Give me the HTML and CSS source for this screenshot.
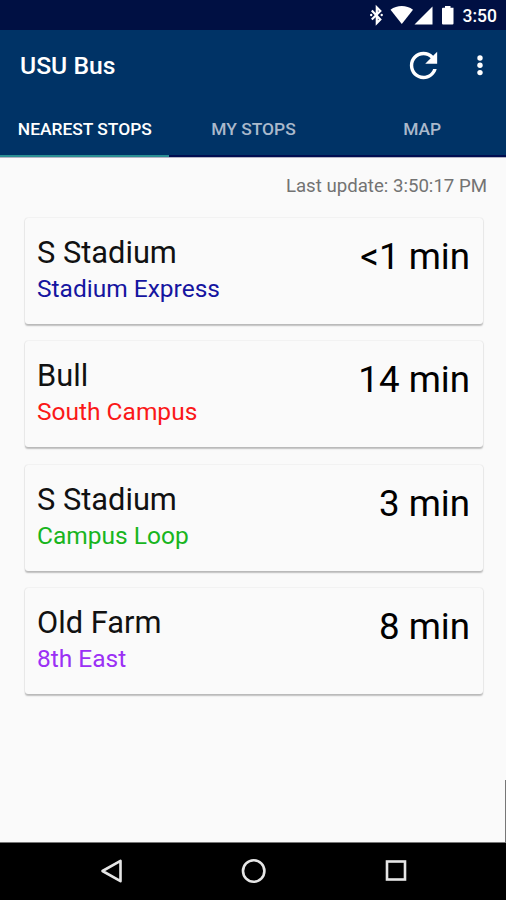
FILE: index.html
```html
<!DOCTYPE html>
<html lang="en">
<head>
<meta charset="utf-8">
<title>USU Bus</title>
<link rel="stylesheet" href="styles.css">
</head>
<body>
<div class="status">
  <svg class="status-icons" width="84" height="30" viewBox="0 0 84 30" fill="#fff">
    <path d="M.8 10.500 9.300 19.500 5.800 23V7.500L9.300 11 .8 19.500" fill="none" stroke="#fff" stroke-width="2.200"/>
    <circle cx=".2" cy="15" r="1.200"/><circle cx="10.700" cy="15" r="1.200"/>
    <path d="M19.500 9.700C26 4.900 35.500 4.900 42 9.700L30.800 24Z"/>
    <path d="M61.500 6.500V24.500H43.500Z"/>
    <path d="M74 6h5.500v1.800H82.500V23.500q0 1-1 1H72q-1 0-1-1V8.800q0-1 1-1h2z"/>
  </svg>
  <span class="clock">3:50</span>
</div>
<header class="header">
  <div class="toolbar">
    <h1 class="title">USU Bus</h1>
    <svg class="refresh" width="41" height="41" viewBox="0 0 24 24" fill="#fff"><path d="M17.65 6.350C16.200 4.900 14.210 4 12 4c-4.420 0-7.990 3.580-7.990 8s3.570 8 7.990 8c3.730 0 6.840-2.550 7.730-6h-2.080c-.82 2.330-3.040 4-5.650 4-3.310 0-6-2.690-6-6s2.690-6 6-6c1.660 0 3.140.69 4.220 1.780L13 11h7V4l-2.350 2.350z"/></svg>
    <svg class="more" width="8" height="22" viewBox="0 0 8 22" fill="#fff"><circle cx="4" cy="3" r="2.700"/><circle cx="4" cy="10.300" r="2.700"/><circle cx="4" cy="17.600" r="2.700"/></svg>
  </div>
  <nav class="tabs">
    <span class="tab active">NEAREST STOPS</span>
    <span class="tab">MY STOPS</span>
    <span class="tab">MAP</span>
  </nav>
</header>
<main class="content">
  <p class="updated">Last update: 3:50:17 PM</p>
  <section class="cards">
    <article class="card"><div><h2 class="stop">S Stadium</h2><p class="route express">Stadium Express</p></div><span class="eta">&lt;1 min</span></article>
    <article class="card"><div><h2 class="stop">Bull</h2><p class="route south">South Campus</p></div><span class="eta">14 min</span></article>
    <article class="card"><div><h2 class="stop">S Stadium</h2><p class="route loop">Campus Loop</p></div><span class="eta">3 min</span></article>
    <article class="card"><div><h2 class="stop">Old Farm</h2><p class="route east">8th East</p></div><span class="eta">8 min</span></article>
  </section>
  <div class="scrollbar"></div>
</main>
<footer class="navbar">
  <svg width="506" height="57" viewBox="0 0 506 57" fill="none" stroke="#e6e6e6" stroke-width="2.600">
    <path d="M102.500 28 120.500 17.800V38.200Z" stroke-linejoin="round"/>
    <circle cx="253.700" cy="28" r="10.700"/>
    <rect x="387" y="18.500" width="18" height="18"/>
  </svg>
</footer>
</body>
</html>
```
FILE: styles.css
```css
* { box-sizing: border-box; }
body {
  margin: 0;
  width: 506px;
  height: 900px;
  display: flex;
  flex-direction: column;
  overflow: hidden;
  background: #fafafa;
  font-family: Roboto, sans-serif;
  color: #111;
}
h1, h2, p { margin: 0; font-weight: 400; }
.status {
  height: 30px;
  flex: none;
  display: flex;
  justify-content: flex-end;
  padding-right: 9px;
  background: #001043;
  color: #fff;
}
.status-icons { overflow: visible; margin-right: 8px; }
.clock { font-size: 17.5px; line-height: 32px; font-weight: 500; }
.header {
  height: 128px;
  flex: none;
  background: #003366;
  border-bottom: 1px solid #b4b4c4;
}
.toolbar {
  height: 71px;
  display: flex;
  align-items: center;
  padding: 0 22.5px 0 20px;
}
.title {
  flex: 1;
  font-size: 24.700px;
  font-weight: 500;
  color: #fff;
}
.refresh { margin-right: 31.5px; }
.tabs { display: flex; height: 56px; }
.tab {
  flex: 1;
  display: flex;
  align-items: center;
  justify-content: center;
  padding: 2px 0 0 1px;
  border-bottom: 2px solid #000d50;
  font-size: 17.4px;
  font-weight: 500;
  color: #aab9cb;
}
.tab.active { border-bottom-color: #2a8f93; color: #fff; }
.content { position: relative; flex: 1; }
.updated {
  padding: 16px 19px 0 0;
  text-align: right;
  font-size: 18.65px;
  line-height: 24px;
  color: #737373;
}
.cards {
  display: flex;
  flex-direction: column;
  gap: 17.5px;
  padding: 19.6px 23px 0 25px;
}
.card {
  height: 106px;
  display: flex;
  justify-content: space-between;
  padding: 17px 13px 0 12px;
  border-radius: 3px;
  background: #fafafa;
  box-shadow: 0 1.5px 1.5px rgba(0, 0, 0, .24), 0 0 1.5px rgba(0, 0, 0, .14);
}
.stop { font-size: 30.8px; line-height: 36px; }
.route { font-size: 24.500px; line-height: 35px; }
.express { color: #1515a0; }
.south { color: #fa1818; }
.loop { color: #18b51e; }
.east { color: #9b30f5; }
.eta { font-size: 36.7px; line-height: 44px; color: #000; }
.scrollbar {
  position: absolute;
  right: 0;
  bottom: 0;
  width: 1px;
  height: 62px;
  background: #777;
}
.navbar {
  height: 58px;
  flex: none;
  background: #000;
  border-top: 1px solid #777;
}
```
